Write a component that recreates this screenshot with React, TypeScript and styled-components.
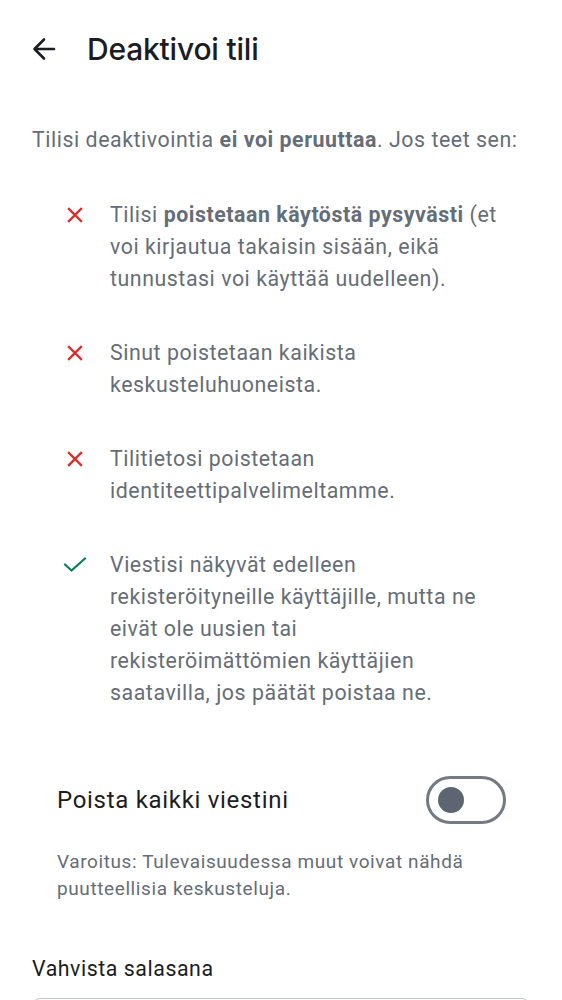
import React from "react";
import styled, { createGlobalStyle } from "styled-components";

const Global = createGlobalStyle`
  html, body { margin: 0; padding: 0; background: #ffffff; }
  body { font-family: Roboto, "Noto Sans", sans-serif; -webkit-font-smoothing: antialiased; }
  * { box-sizing: border-box; }
`;

const Page = styled.div`
  width: 562px;
  min-height: 1000px;
  display: flex;
  flex-direction: column;
  background: #fff;
`;

const Header = styled.header`
  height: 98px;
  display: flex;
  align-items: center;
  padding: 0 0 0 30px;
  gap: 29px;
`;

const BackButton = styled.button`
  width: 28px;
  height: 28px;
  padding: 0;
  border: none;
  background: none;
  display: flex;
  align-items: center;
  justify-content: center;
  color: #1b1d22;
`;

const Title = styled.h1`
  margin: 0;
  font-family: Inter, Roboto, sans-serif;
  font-weight: 500;
  font-size: 30px;
  color: #1b1d22;
  letter-spacing: -0.2px;
`;

const Content = styled.main`
  display: flex;
  flex-direction: column;
  padding: 0 32px;
`;

const BodyText = `
  font-size: 21.33px;
  line-height: 32px;
  letter-spacing: 0.55px;
`;

const Intro = styled.p`
  margin: 26px 0 0;
  ${BodyText}
  color: #656d77;
`;

const List = styled.ul`
  list-style: none;
  margin: 43px 0 0;
  padding: 0 30px 0 30px;
  display: flex;
  flex-direction: column;
  gap: 42px;
`;

const Item = styled.li`
  display: flex;
  align-items: flex-start;
  gap: 22px;
  ${BodyText}
  color: #656d77;
`;

const IconBox = styled.span`
  width: 26px;
  height: 32px;
  flex: none;
  display: flex;
  align-items: center;
  justify-content: center;
`;

const Strong = styled.b`
  font-weight: 700;
`;

const ToggleRow = styled.div`
  margin-top: 67px;
  padding: 0 24px 0 25px;
  display: flex;
  align-items: center;
  justify-content: space-between;
`;

const ToggleLabel = styled.span`
  font-size: 24px;
  letter-spacing: 0.7px;
  color: #1b1d22;
`;

const Switch = styled.span`
  width: 80px;
  height: 48px;
  border: 3px solid #737a83;
  border-radius: 24px;
  display: flex;
  align-items: center;
  padding-left: 9px;
`;

const Thumb = styled.span`
  width: 26px;
  height: 26px;
  border-radius: 50%;
  background: #5d6570;
`;

const Warning = styled.p`
  margin: 25px 0 0;
  padding-left: 25px;
  font-size: 19px;
  line-height: 26.67px;
  color: #656d77;
  letter-spacing: 0.6px;
`;

const FieldLabel = styled.label`
  margin-top: 53px;
  ${BodyText}
  line-height: 28px;
  color: #1b1d22;
`;

const Input = styled.div`
  margin-top: 15px;
  height: 56px;
  border: 1px solid #c0c6cd;
  border-radius: 8px;
`;

const Cross = () => (
  <svg width="16" height="16" viewBox="0 0 16 16">
    <path d="M2 2 L14 14 M14 2 L2 14" stroke="#e02b2b" strokeWidth="2.4" strokeLinecap="square" />
  </svg>
);

const Check = () => (
  <svg width="24" height="16" viewBox="0 0 24 16">
    <path d="M2 7.5 L8.5 13.5 L22 1.5" stroke="#0b7d5a" strokeWidth="2.2" fill="none" strokeLinecap="round" strokeLinejoin="round" />
  </svg>
);

export default function App() {
  return (
    <Page>
      <Global />
      <Header>
        <BackButton aria-label="Takaisin">
          <svg width="26" height="26" viewBox="0 0 26 26">
            <path d="M23 13 H4 M13 3.5 L3.5 13 L13 22.5" stroke="#1b1d22" strokeWidth="2.6" fill="none" strokeLinecap="round" strokeLinejoin="round" />
          </svg>
        </BackButton>
        <Title>Deaktivoi tili</Title>
      </Header>
      <Content>
        <Intro>
          Tilisi deaktivointia <Strong>ei voi peruuttaa</Strong>. Jos teet sen:
        </Intro>
        <List>
          <Item>
            <IconBox><Cross /></IconBox>
            <span>
              Tilisi <Strong>poistetaan käytöstä pysyvästi</Strong> (et voi kirjautua takaisin sisään, eikä tunnustasi voi käyttää uudelleen).
            </span>
          </Item>
          <Item>
            <IconBox><Cross /></IconBox>
            <span>Sinut poistetaan kaikista keskusteluhuoneista.</span>
          </Item>
          <Item>
            <IconBox><Cross /></IconBox>
            <span>Tilitietosi poistetaan identiteettipalvelimeltamme.</span>
          </Item>
          <Item>
            <IconBox><Check /></IconBox>
            <span>
              Viestisi näkyvät edelleen rekisteröityneille käyttäjille, mutta ne eivät ole uusien tai rekisteröimättömien käyttäjien saatavilla, jos päätät poistaa ne.
            </span>
          </Item>
        </List>
        <ToggleRow>
          <ToggleLabel>Poista kaikki viestini</ToggleLabel>
          <Switch><Thumb /></Switch>
        </ToggleRow>
        <Warning>
          Varoitus: Tulevaisuudessa muut voivat nähdä puutteellisia keskusteluja.
        </Warning>
        <FieldLabel>Vahvista salasana</FieldLabel>
        <Input />
      </Content>
    </Page>
  );
}
